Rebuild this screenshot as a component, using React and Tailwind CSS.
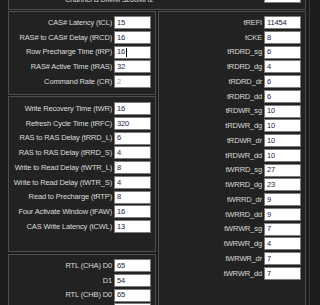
const primary = [
  ["CAS# Latency (tCL)", "15"],
  ["RAS# to CAS# Delay (tRCD)", "16"],
  ["Row Precharge Time (tRP)", "16", "caret"],
  ["RAS# Active Time (tRAS)", "32"],
  ["Command Rate (CR)", "2", "disabled"],
];

const secondary = [
  ["Write Recovery Time (tWR)", "16"],
  ["Refresh Cycle Time (tRFC)", "320"],
  ["RAS to RAS Delay (tRRD_L)", "6"],
  ["RAS to RAS Delay (tRRD_S)", "4"],
  ["Write to Read Delay (tWTR_L)", "8"],
  ["Write to Read Delay (tWTR_S)", "4"],
  ["Read to Precharge (tRTP)", "8"],
  ["Four Activate Window (tFAW)", "16"],
  ["CAS Write Latency (tCWL)", "13"],
];

const rtl = [
  ["RTL (CHA) D0", "65"],
  ["D1", "54"],
  ["RTL (CHB) D0", "65"],
  ["D1", "54"],
];

const turnaround = [
  ["tREFI", "11454"],
  ["tCKE", "8"],
  ["tRDRD_sg", "6"],
  ["tRDRD_dg", "4"],
  ["tRDRD_dr", "6"],
  ["tRDRD_dd", "6"],
  ["tRDWR_sg", "10"],
  ["tRDWR_dg", "10"],
  ["tRDWR_dr", "10"],
  ["tRDWR_dd", "10"],
  ["tWRRD_sg", "27"],
  ["tWRRD_dg", "23"],
  ["tWRRD_dr", "9"],
  ["tWRRD_dd", "9"],
  ["tWRWR_sg", "7"],
  ["tWRWR_dg", "4"],
  ["tWRWR_dr", "7"],
  ["tWRWR_dd", "7"],
];

const Field = ({ label, value, flag }) => (
  <div className="flex items-center justify-end gap-[2px] h-[13px] shrink-0">
    <span className="whitespace-nowrap">{label}</span>
    <div className="w-[37px] h-[13px] bg-white border border-[#7c7c7c] flex items-center pl-[2px]">
      <span className={flag === "disabled" ? "text-[#9a9a9a]" : "text-[#1c2340]"}>{value}</span>
      {flag === "caret" && <span className="w-px h-[9px] bg-black ml-[1px]" />}
    </div>
  </div>
);

const Panel = ({ rows, className }) => (
  <div className={"border border-[#4e4e4e] bg-[#222222] flex flex-col gap-[1.75px] pr-[4px] overflow-hidden " + className}>
    {rows.map(([label, value, flag], i) => (
      <Field key={i} label={label} value={value} flag={flag} />
    ))}
  </div>
);

export default function App() {
  return (
    <div className="w-[320px] h-[305px] overflow-hidden bg-[#1c1c1c] font-['Liberation_Sans',Arial,sans-serif] text-[7.5px] tracking-[-0.15px] text-[#dcdcdc]">
      <div className="w-[310px] h-[305px] border-r border-[#3c3c3c] pl-[8px] flex flex-col">
        <div className="w-[298px] h-[10px] border-x border-b border-[#4e4e4e] bg-[#222222] flex items-start pr-[4px] overflow-hidden shrink-0">
          <span className="ml-[56px] -mt-[6px] whitespace-nowrap">Channel B DIMM 3200MHz</span>
          <div className="ml-auto w-[37px] h-[3px] bg-white border-x border-b border-[#7c7c7c]" />
        </div>
        <div className="flex gap-[2px] mt-[1px] w-[298px]">
          <div className="w-[148px] flex flex-col">
            <Panel rows={primary} className="h-[84px] pt-[4px]" />
            <Panel rows={secondary} className="h-[156px] pt-[5px] mt-[1px]" />
            <Panel rows={rtl} className="h-[60px] pt-[4px] mt-[2px] border-b-0" />
          </div>
          <Panel rows={turnaround} className="w-[148px] h-[300px] pt-[4px] border-b-0" />
        </div>
      </div>
    </div>
  );
}
